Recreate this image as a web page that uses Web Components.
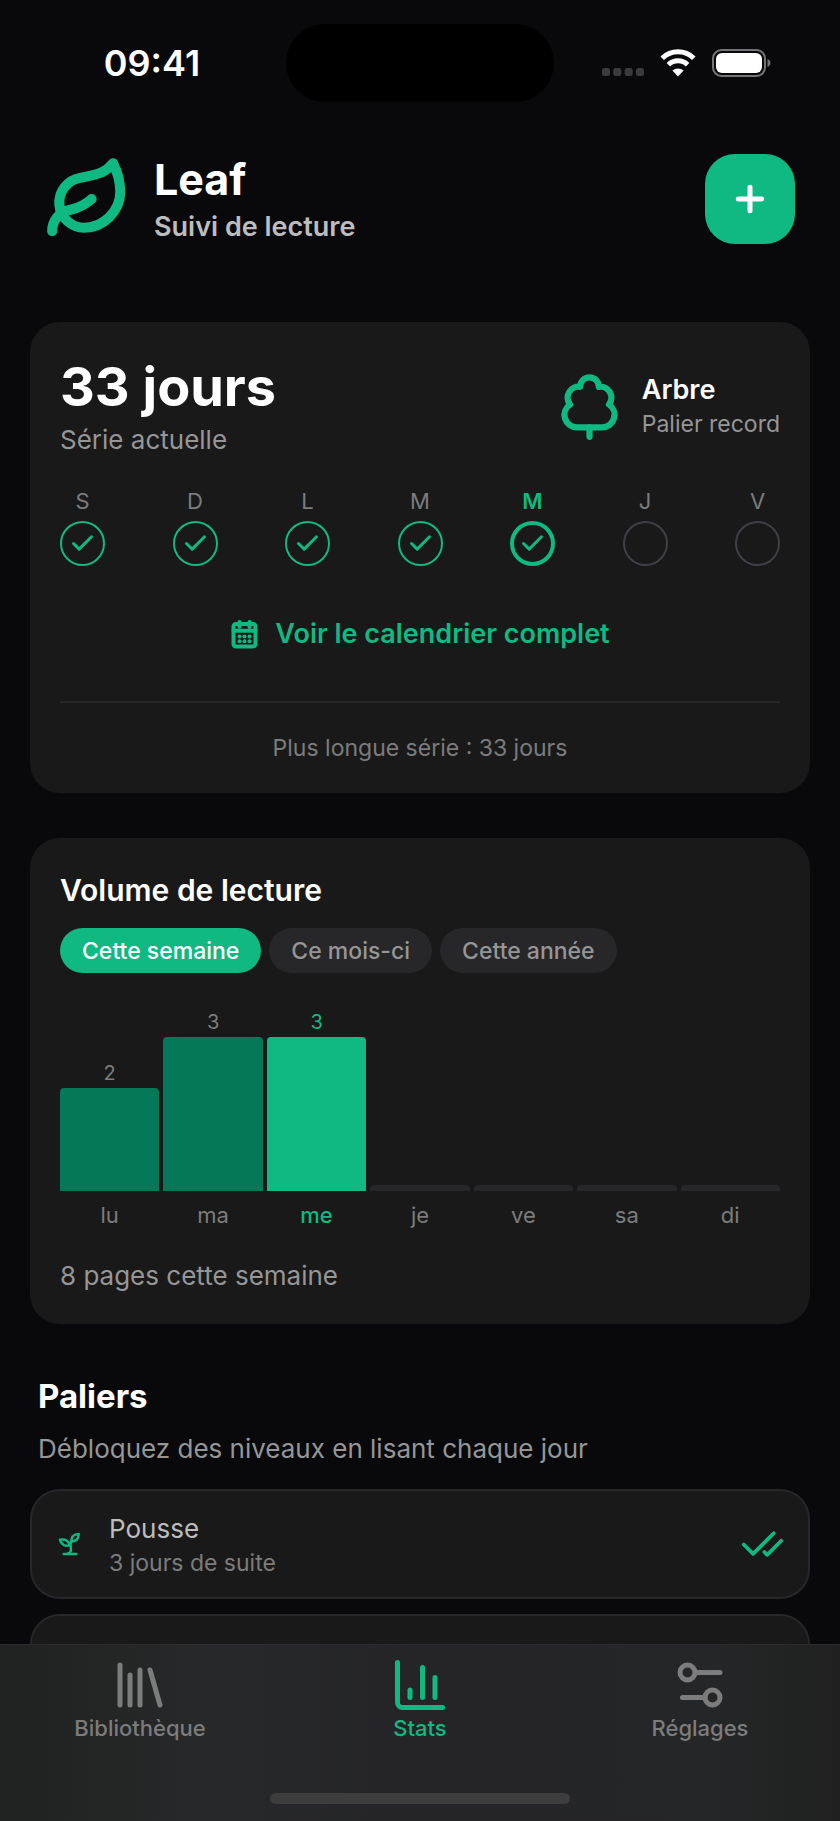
<!DOCTYPE html>
<html lang="fr">
<head>
<meta charset="utf-8">
<meta name="viewport" content="width=device-width, initial-scale=1">
<title>Leaf</title>
<style>
  :root {
    --bg: #09090b;
    --card: #19191a;
    --line: #27272a;
    --green: #10b981;
    --green-dark: #047857;
    --text: #ffffff;
    --soft: #bdbdbd;
    --muted: #969696;
    --faint: #7c7c7c;
  }
  body {
    margin: 0;
    background: var(--bg);
    color: var(--text);
    font-family: Inter, "Liberation Sans", sans-serif;
    font-size: 26px;
    line-height: 36px;
  }
</style>
</head>
<body>
<leaf-app>
  <status-bar slot="status" time="09:41"></status-bar>
  <app-header slot="header" title="Leaf" subtitle="Suivi de lecture"></app-header>

  <app-card>
    <streak-summary count="33 jours" label="Série actuelle" tier="Arbre" note="Palier record"></streak-summary>
    <week-streak>
      <streak-day name="S" done></streak-day>
      <streak-day name="D" done></streak-day>
      <streak-day name="L" done></streak-day>
      <streak-day name="M" done></streak-day>
      <streak-day name="M" done today></streak-day>
      <streak-day name="J"></streak-day>
      <streak-day name="V"></streak-day>
    </week-streak>
    <calendar-button>Voir le calendrier complet</calendar-button>
    <card-footer>Plus longue série : 33 jours</card-footer>
  </app-card>

  <app-card>
    <reading-volume title="Volume de lecture" total="8 pages cette semaine"></reading-volume>
  </app-card>

  <tier-list title="Paliers" subtitle="Débloquez des niveaux en lisant chaque jour">
    <tier-row icon="sprout" name="Pousse" note="3 jours de suite"></tier-row>
    <tier-row></tier-row>
  </tier-list>

  <tab-bar slot="tabs">
    <tab-item icon="library" href="#bibliotheque">Bibliothèque</tab-item>
    <tab-item icon="chart" href="#stats" active>Stats</tab-item>
    <tab-item icon="settings" href="#reglages">Réglages</tab-item>
  </tab-bar>
</leaf-app>

<script>
'use strict';

(function () {
  const ICONS = {
    leaf: '<path d="M11 20A7 7 0 0 1 9.8 6.1C15.5 5 17 4.48 19 2c1 2 2 4.18 2 8 0 5.5-4.78 10-10 10Z"/><path d="M2 21c0-3 1.85-5.36 5.08-6C9.5 14.52 12 13 13 12"/>',
    plus: '<path d="M5 12h14"/><path d="M12 5v14"/>',
    tree: '<path d="M8 19a4 4 0 0 1-2.24-7.32A3.5 3.5 0 0 1 9 6.03V6a3 3 0 1 1 6 0v.04a3.5 3.5 0 0 1 3.24 5.65A4 4 0 0 1 16 19Z"/><path d="M12 19v3"/>',
    check: '<path d="M20 6 9 17l-5-5"/>',
    checks: '<path d="M18 6 7 17l-5-5"/><path d="m22 10-7.5 7.5L13 16"/>',
    calendar: '<rect x="2.8" y="4" width="17.6" height="18" rx="2"/><path d="M2.8 9.4h17.6"/><path d="M7.6 2.4v4M15.6 2.4v4"/><g fill="currentColor" stroke="none"><circle cx="7.6" cy="14" r="1.6"/><circle cx="11.6" cy="14" r="1.6"/><circle cx="15.6" cy="14" r="1.6"/><circle cx="7.6" cy="17.8" r="1.6"/><circle cx="11.6" cy="17.8" r="1.6"/><circle cx="15.6" cy="17.8" r="1.6"/></g>',
    sprout: '<path d="M7 20h10"/><path d="M10 20c5.5-2.5.8-6.4 3-10"/><path d="M9.5 9.4c1.1.8 1.8 2.2 2.3 3.7-2 .4-3.5.4-4.8-.3-1.2-.6-2.3-1.9-3-4.2 2.8-.5 4.4 0 5.5.8z"/><path d="M14.1 6a7 7 0 0 0-1.1 4c1.9-.1 3.3-.6 4.3-1.4 1-1 1.6-2.3 1.7-4.6-2.7.1-4 1-4.9 2z"/>',
    library: '<path d="m16 6 4 14"/><path d="M12 6v14"/><path d="M8 8v12"/><path d="M4 4v16"/>',
    chart: '<path d="M3 3v16a2 2 0 0 0 2 2h16"/><path d="M18 17V9"/><path d="M13 17V5"/><path d="M8 17v-3"/>',
    settings: '<path d="M20 7h-9"/><path d="M14 17H5"/><circle cx="17" cy="17" r="3"/><circle cx="7" cy="7" r="3"/>',
  };

  // attaches the shadow tree and fills it with markup
  function render(host, html) {
    if (!host.shadowRoot) {
      host.attachShadow({ mode: 'open' });
    }
    host.shadowRoot.innerHTML = html;
  }

  class AppIcon extends HTMLElement {
    connectedCallback() {
      const name = this.getAttribute('name');
      const size = this.getAttribute('size') || 24;
      const stroke = this.getAttribute('stroke') || 2;

      render(this, `
        <style>
          :host { display: inline-flex; flex: none; }
          svg { display: block; }
        </style>
        <svg width="${size}" height="${size}" viewBox="0 0 24 24" fill="none" stroke="currentColor"
          stroke-width="${stroke}" stroke-linecap="round" stroke-linejoin="round" aria-hidden="true">
          ${ICONS[name] || ''}
        </svg>
      `);
    }
  }

  class LeafApp extends HTMLElement {
    connectedCallback() {
      render(this, `
        <style>
          :host {
            display: flex;
            flex-direction: column;
            height: 100vh;
          }
          .page {
            flex: 1;
            min-height: 0;
            overflow-y: auto;
            scrollbar-width: none;
          }
          main {
            display: flex;
            flex-direction: column;
            gap: 45px;
            padding: 45px 30px 30px;
          }
        </style>
        <div class="page">
          <slot name="status"></slot>
          <slot name="header"></slot>
          <main><slot></slot></main>
        </div>
        <slot name="tabs"></slot>
      `);
    }
  }

  class StatusBar extends HTMLElement {
    connectedCallback() {
      render(this, `
        <style>
          :host {
            display: grid;
            grid-template-columns: 1fr 268px 1fr;
            align-items: center;
            height: 126px;
          }
          .time {
            padding-left: 18px;
            text-align: center;
            font-size: 36px;
            font-weight: 600;
          }
          .island {
            height: 78px;
            border-radius: 39px;
            background: #000000;
          }
          .signals {
            display: flex;
            align-items: center;
            justify-content: flex-end;
            gap: 16px;
            padding-right: 69px;
          }
          svg { display: block; }
        </style>
        <span class="time">${this.getAttribute('time')}</span>
        <div class="island"></div>
        <div class="signals">
          <svg width="42" height="28" viewBox="0 0 42 28" fill="#3b3b3d" aria-hidden="true">
            <rect x="0" y="19" width="8" height="8" rx="2.5"/>
            <rect x="11.3" y="19" width="8" height="8" rx="2.5"/>
            <rect x="22.6" y="19" width="8" height="8" rx="2.5"/>
            <rect x="34" y="19" width="8" height="8" rx="2.5"/>
          </svg>
          <svg width="36" height="28" viewBox="0 0 36 28" aria-hidden="true">
            <g fill="none" stroke="#ffffff" stroke-width="5">
              <path d="M2.2 9.3a22.6 22.6 0 0 1 31.6 0"/>
              <path d="M8.4 15.7a13.8 13.8 0 0 1 19.2 0"/>
            </g>
            <path d="M18 27.4 12.4 21.6a8.2 8.2 0 0 1 11.2 0Z" fill="#ffffff"/>
          </svg>
          <svg width="59" height="28" viewBox="0 0 59 28" aria-hidden="true">
            <rect x="1" y="1" width="52" height="26" rx="8.5" fill="none" stroke="#747476" stroke-width="2"/>
            <rect x="4" y="4" width="46" height="20" rx="6" fill="#ffffff"/>
            <path d="M55.5 10c4 1.5 4 6.5 0 8Z" fill="#747476"/>
          </svg>
        </div>
      `);
    }
  }

  class AppHeader extends HTMLElement {
    connectedCallback() {
      render(this, `
        <style>
          :host {
            display: flex;
            align-items: center;
            gap: 23px;
            padding: 26px 45px 32px;
          }
          app-icon { color: var(--green); }
          .titles { flex: 1; }
          h1 {
            margin: 0 0 3px;
            font-size: 43px;
            line-height: 54px;
            font-weight: 700;
          }
          p {
            margin: 0;
            color: var(--soft);
            font-size: 27px;
            font-weight: 600;
          }
          button {
            display: flex;
            align-items: center;
            justify-content: center;
            width: 90px;
            height: 90px;
            padding: 0;
            border: 0;
            border-radius: 30px;
            background: var(--green);
            color: var(--text);
            cursor: pointer;
          }
          button app-icon { color: inherit; }
        </style>
        <app-icon name="leaf" size="86" stroke="2.8"></app-icon>
        <div class="titles">
          <h1>${this.getAttribute('title')}</h1>
          <p>${this.getAttribute('subtitle')}</p>
        </div>
        <button type="button" aria-label="Ajouter"><app-icon name="plus" size="40" stroke="3"></app-icon></button>
      `);
    }
  }

  class AppCard extends HTMLElement {
    connectedCallback() {
      render(this, `
        <style>
          :host {
            display: block;
            padding: 30px;
            border-radius: 30px;
            background: var(--card);
          }
        </style>
        <slot></slot>
      `);
    }
  }

  class StreakSummary extends HTMLElement {
    connectedCallback() {
      render(this, `
        <style>
          :host {
            display: flex;
            align-items: center;
            justify-content: space-between;
          }
          h2 {
            margin: 0;
            font-size: 54px;
            line-height: 70px;
            font-weight: 700;
          }
          p { margin: 0; color: var(--muted); }
          .tier {
            display: flex;
            align-items: center;
            gap: 15px;
          }
          .tier app-icon { color: var(--green); }
          .tier div { padding-top: 3px; }
          .tier strong {
            display: block;
            font-size: 27px;
            font-weight: 600;
          }
          .tier p { font-size: 23px; line-height: 33px; }
        </style>
        <div>
          <h2>${this.getAttribute('count')}</h2>
          <p>${this.getAttribute('label')}</p>
        </div>
        <div class="tier">
          <app-icon name="tree" size="75"></app-icon>
          <div>
            <strong>${this.getAttribute('tier')}</strong>
            <p>${this.getAttribute('note')}</p>
          </div>
        </div>
      `);
    }
  }

  class WeekStreak extends HTMLElement {
    connectedCallback() {
      render(this, `
        <style>
          :host {
            display: flex;
            justify-content: space-between;
            padding-top: 28px;
          }
        </style>
        <slot></slot>
      `);
    }
  }

  class StreakDay extends HTMLElement {
    connectedCallback() {
      const done = this.hasAttribute('done');

      render(this, `
        <style>
          :host {
            display: flex;
            flex-direction: column;
            align-items: center;
            gap: 5px;
            color: var(--faint);
            font-size: 22px;
            line-height: 30px;
          }
          :host([today]) { color: var(--green); font-weight: 600; }
          .ring {
            display: flex;
            align-items: center;
            justify-content: center;
            box-sizing: border-box;
            width: 45px;
            height: 45px;
            border: 2px solid #3f3f46;
            border-radius: 50%;
            color: var(--green);
          }
          :host([done]) .ring { border-color: var(--green); }
          :host([today]) .ring { border-width: 4px; }
        </style>
        <span>${this.getAttribute('name')}</span>
        <div class="ring">${done ? '<app-icon name="check" size="27" stroke="2.6"></app-icon>' : ''}</div>
      `);
    }
  }

  class CalendarButton extends HTMLElement {
    connectedCallback() {
      render(this, `
        <style>
          :host {
            display: flex;
            justify-content: center;
            padding: 30px 0;
          }
          button {
            display: flex;
            align-items: center;
            gap: 15px;
            height: 75px;
            padding: 0 30px;
            border: 0;
            background: none;
            color: var(--green);
            font: inherit;
            font-size: 27px;
            font-weight: 600;
            cursor: pointer;
          }
        </style>
        <button type="button">
          <app-icon name="calendar" size="30" stroke="3.2"></app-icon>
          <slot></slot>
        </button>
      `);
    }
  }

  class CardFooter extends HTMLElement {
    connectedCallback() {
      render(this, `
        <style>
          :host {
            display: block;
            padding-top: 30px;
            border-top: 2px solid var(--line);
            color: var(--faint);
            font-size: 23px;
            line-height: 30px;
            text-align: center;
          }
        </style>
        <slot></slot>
      `);
    }
  }

  class ReadingVolume extends HTMLElement {
    connectedCallback() {
      const periods = ['Cette semaine', 'Ce mois-ci', 'Cette année'];
      const days = [
        { name: 'lu', pages: 2 },
        { name: 'ma', pages: 3 },
        { name: 'me', pages: 3, today: true },
        { name: 'je', pages: 0 },
        { name: 've', pages: 0 },
        { name: 'sa', pages: 0 },
        { name: 'di', pages: 0 },
      ];
      const max = Math.max(...days.map((day) => day.pages));

      const chips = periods
        .map((period, index) => `<button type="button" aria-pressed="${index === 0}">${period}</button>`)
        .join('');

      const columns = days
        .map((day) => {
          const classes = [day.pages ? '' : 'empty', day.today ? 'today' : ''].join(' ');
          return `
            <li class="${classes}" style="--ratio: ${day.pages / max}">
              <div class="plot">
                ${day.pages ? `<span class="value">${day.pages}</span>` : ''}
                <div class="bar"></div>
              </div>
              <span class="day">${day.name}</span>
            </li>`;
        })
        .join('');

      render(this, `
        <style>
          :host { display: block; }
          h2 {
            margin: 0;
            font-size: 30px;
            line-height: 45px;
            font-weight: 600;
          }
          .chips {
            display: flex;
            flex-wrap: wrap;
            gap: 8px;
            margin-top: 15px;
          }
          button {
            height: 45px;
            padding: 0 22px;
            border: 0;
            border-radius: 23px;
            background: var(--line);
            color: var(--muted);
            font: inherit;
            font-size: 23px;
            font-weight: 500;
            cursor: pointer;
          }
          button[aria-pressed="true"] {
            background: var(--green);
            color: var(--text);
          }
          ul {
            display: flex;
            gap: 4px;
            margin: 30px 0 0;
            padding: 0;
            list-style: none;
          }
          li {
            flex: 1;
            color: var(--faint);
            text-align: center;
          }
          .plot {
            display: flex;
            flex-direction: column;
            justify-content: flex-end;
            height: 188px;
          }
          .value {
            font-size: 20px;
            line-height: 30px;
          }
          .bar {
            height: calc(var(--ratio) * 154px);
            border-radius: 4px 4px 0 0;
            background: var(--green-dark);
          }
          .empty .bar {
            height: 6px;
            background: var(--line);
          }
          .day {
            display: block;
            margin-top: 9px;
            font-size: 22px;
            line-height: 30px;
          }
          .today { color: var(--green); }
          .today .day { font-weight: 500; }
          .today .bar { background: var(--green); }
          p { margin: 28px 0 0; color: var(--muted); }
        </style>
        <h2>${this.getAttribute('title')}</h2>
        <div class="chips">${chips}</div>
        <ul>${columns}</ul>
        <p>${this.getAttribute('total')}</p>
      `);

      this.shadowRoot.querySelectorAll('button').forEach((button, index, all) => {
        button.addEventListener('click', () => {
          all.forEach((item) => item.setAttribute('aria-pressed', item === button));
        });
      });
    }
  }

  class TierList extends HTMLElement {
    connectedCallback() {
      render(this, `
        <style>
          :host { display: block; }
          header { padding: 0 8px; }
          h2 {
            margin: 0 0 8px;
            font-size: 33px;
            line-height: 54px;
            font-weight: 700;
          }
          p { margin: 0; color: var(--muted); }
          .rows {
            display: flex;
            flex-direction: column;
            gap: 15px;
            margin-top: 22px;
          }
        </style>
        <header>
          <h2>${this.getAttribute('title')}</h2>
          <p>${this.getAttribute('subtitle')}</p>
        </header>
        <div class="rows"><slot></slot></div>
      `);
    }
  }

  class TierRow extends HTMLElement {
    connectedCallback() {
      const name = this.getAttribute('name');

      // a row without a name is still locked and stays blank
      const content = name ? `
        <app-icon name="${this.getAttribute('icon')}" size="30"></app-icon>
        <div class="texts">
          <div class="name">${name}</div>
          <div class="note">${this.getAttribute('note')}</div>
        </div>
        <app-icon name="checks" size="45"></app-icon>
      ` : '';

      render(this, `
        <style>
          :host {
            display: flex;
            align-items: center;
            gap: 24px;
            box-sizing: border-box;
            min-height: 110px;
            padding: 17px 23px;
            border: 2px solid var(--line);
            border-radius: 30px;
            background: var(--card);
          }
          app-icon { color: var(--green); }
          .texts { flex: 1; padding-top: 2px; }
          .name { color: var(--soft); }
          .note {
            color: var(--faint);
            font-size: 23px;
            line-height: 33px;
          }
        </style>
        ${content}
      `);
    }
  }

  class TabBar extends HTMLElement {
    connectedCallback() {
      render(this, `
        <style>
          :host {
            display: block;
            border-top: 1px solid #2c2c2e;
            background: linear-gradient(90deg, #202221, #272829 24%, #252527 50%, #252627 85%, #1f201f);
          }
          nav { display: flex; padding-top: 10px; }
          .home {
            width: 300px;
            height: 11px;
            margin: 51px auto 17px;
            border-radius: 6px;
            background: #3d3d3d;
          }
        </style>
        <nav><slot></slot></nav>
        <div class="home"></div>
      `);
    }
  }

  class TabItem extends HTMLElement {
    connectedCallback() {
      render(this, `
        <style>
          :host { display: block; flex: 1; }
          a {
            display: flex;
            flex-direction: column;
            align-items: center;
            color: var(--faint);
            font-size: 22px;
            line-height: 27px;
            font-weight: 500;
            text-decoration: none;
          }
          :host([active]) a { color: var(--green); }
        </style>
        <a href="${this.getAttribute('href')}">
          <app-icon name="${this.getAttribute('icon')}" size="60"></app-icon>
          <span><slot></slot></span>
        </a>
      `);
    }
  }

  customElements.define('app-icon', AppIcon);
  customElements.define('leaf-app', LeafApp);
  customElements.define('status-bar', StatusBar);
  customElements.define('app-header', AppHeader);
  customElements.define('app-card', AppCard);
  customElements.define('streak-summary', StreakSummary);
  customElements.define('week-streak', WeekStreak);
  customElements.define('streak-day', StreakDay);
  customElements.define('calendar-button', CalendarButton);
  customElements.define('card-footer', CardFooter);
  customElements.define('reading-volume', ReadingVolume);
  customElements.define('tier-list', TierList);
  customElements.define('tier-row', TierRow);
  customElements.define('tab-bar', TabBar);
  customElements.define('tab-item', TabItem);
})();
</script>
</body>
</html>
